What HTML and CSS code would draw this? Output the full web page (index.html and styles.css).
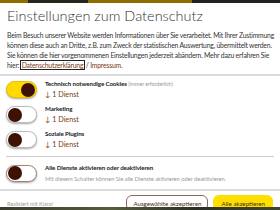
FILE: index.html
```html
<!DOCTYPE html>
<html lang="de">
<head>
<meta charset="utf-8">
<link rel="stylesheet" href="styles.css">
</head>
<body>
<div class="strip strip-top"></div>
<div class="modal">
  <div class="header">
    <h1 class="title">Einstellungen zum Datenschutz</h1>
    <p class="desc">Beim Besuch unserer Website werden Informationen über Sie verarbeitet. Mit Ihrer Zustimmung<br>können diese auch an Dritte, z.B. zum Zweck der statistischen Auswertung, übermittelt werden.<br>Sie können die hier vorgenommenen Einstellungen jederzeit abändern. Mehr dazu erfahren Sie<br>hier: <a class="link focus">Datenschutzerklärung</a> / <a class="link">Impressum</a>.</p>
  </div>
  <div class="body">
    <div class="item">
      <span class="switch on"><span class="knob"></span></span>
      <div class="info">
        <div class="name">Technisch notwendige Cookies <span class="req">(immer erforderlich)</span></div>
        <div class="svc">↓ 1 Dienst</div>
      </div>
    </div>
    <div class="item">
      <span class="switch"><span class="knob"></span></span>
      <div class="info">
        <div class="name">Marketing</div>
        <div class="svc">↓ 1 Dienst</div>
      </div>
    </div>
    <div class="item">
      <span class="switch"><span class="knob"></span></span>
      <div class="info">
        <div class="name">Soziale Plugins</div>
        <div class="svc">↓ 1 Dienst</div>
      </div>
    </div>
    <div class="item all">
      <span class="switch"><span class="knob"></span></span>
      <div class="info">
        <div class="name">Alle Dienste aktivieren oder deaktivieren</div>
        <div class="hint">Mit diesem Schalter können Sie alle Dienste aktivieren oder deaktivieren.</div>
      </div>
    </div>
  </div>
  <div class="footer">
    <span class="powered">Realisiert mit Klaro!</span>
    <div class="buttons">
      <button class="btn btn-outline">Ausgewählte akzeptieren</button>
      <button class="btn btn-accept">Alle akzeptieren</button>
    </div>
  </div>
</div>
<div class="strip strip-bottom"></div>
</body>
</html>
```
FILE: styles.css
```css
html, body { margin: 0; padding: 0; }
body {
  width: 280px;
  height: 210px;
  overflow: hidden;
  background: #2a2a22;
  font-family: Lato, sans-serif;
  color: #333;
}
.strip { height: 3px; }
.strip-top {
  background: linear-gradient(to right, #8c6d00 0 28px, #26261f 28px 88px, #8c6d00 88px 192px, #1f2322 192px);
}
.strip-bottom {
  background: linear-gradient(to right, #3a3d2c, #565c3d 40%, #2c2f25 70%, #3f4631);
}
.modal {
  background: #fff;
  height: 204px;
  overflow: hidden;
  display: flex;
  flex-direction: column;
}
.header {
  padding: 5px 7px 0;
  border-bottom: 2px solid #dcdcdc;
  flex: none;
}
.title {
  margin: 0;
  font-size: 14.5px;
  font-weight: 300;
  line-height: 16px;
  color: #333;
}
.desc {
  margin: 6px 0 4px;
  font-size: 6.8px;
  letter-spacing: -0.2px;
  line-height: 10px;
  color: #333;
  white-space: nowrap;
}
.link { color: #7b3b12; text-decoration: none; }
.focus { outline: 1px solid #222; outline-offset: 0; padding: 0 1px; }
.body {
  padding: 1px 6px 0;
  flex: none;
}
.item {
  display: flex;
  align-items: center;
  gap: 8px;
  height: 25px;
}
.switch {
  flex: none;
  width: 27px;
  height: 15px;
  border-radius: 9px;
  background: #fff;
  border: 1px solid #bbb;
  box-shadow: 0 1px 2px rgba(0,0,0,0.35);
  display: flex;
  align-items: center;
  padding: 0 1px;
}
.switch.on {
  background: #ffd900;
  border-color: #e6c200;
  justify-content: flex-end;
}
.knob {
  width: 14px;
  height: 14px;
  border-radius: 50%;
  background: #3d1205;
}
.info { display: flex; flex-direction: column; gap: 2px; }
.name {
  font-size: 6.2px;
  font-weight: 700;
  letter-spacing: -0.1px;
  color: #222;
  line-height: 8px;
}
.req { font-weight: 400; color: #999; font-size: 5.4px; }
.svc { font-size: 7.2px; color: #7b3b12; line-height: 9px; }
.all {
  margin-top: 4px;
  border-top: 1px solid #cfcfcf;
  height: 32px;
}
.all .switch { border-color: #a08070; }
.all .info { gap: 3px; }
.hint { font-size: 5.8px; letter-spacing: -0.05px; color: #999; line-height: 8px; }
.footer {
  border-top: 2px solid #dcdcdc;
  padding: 4px 7px 0 7px;
  display: flex;
  justify-content: space-between;
  align-items: flex-start;
  flex: none;
}
.powered { font-size: 5.4px; color: #999; margin-top: 6px; }
.buttons { display: flex; gap: 5px; }
.btn {
  font-family: Lato, sans-serif;
  font-size: 6.2px;
  height: 16px;
  border-radius: 6px;
  padding: 0 6px;
  color: #4a2a10;
  cursor: pointer;
}
.btn-outline { background: #fff; border: 1px solid #8a6a5a; }
.btn-accept { background: #ffdf00; border: 1px solid #ffdf00; padding: 0 7px; }
```
